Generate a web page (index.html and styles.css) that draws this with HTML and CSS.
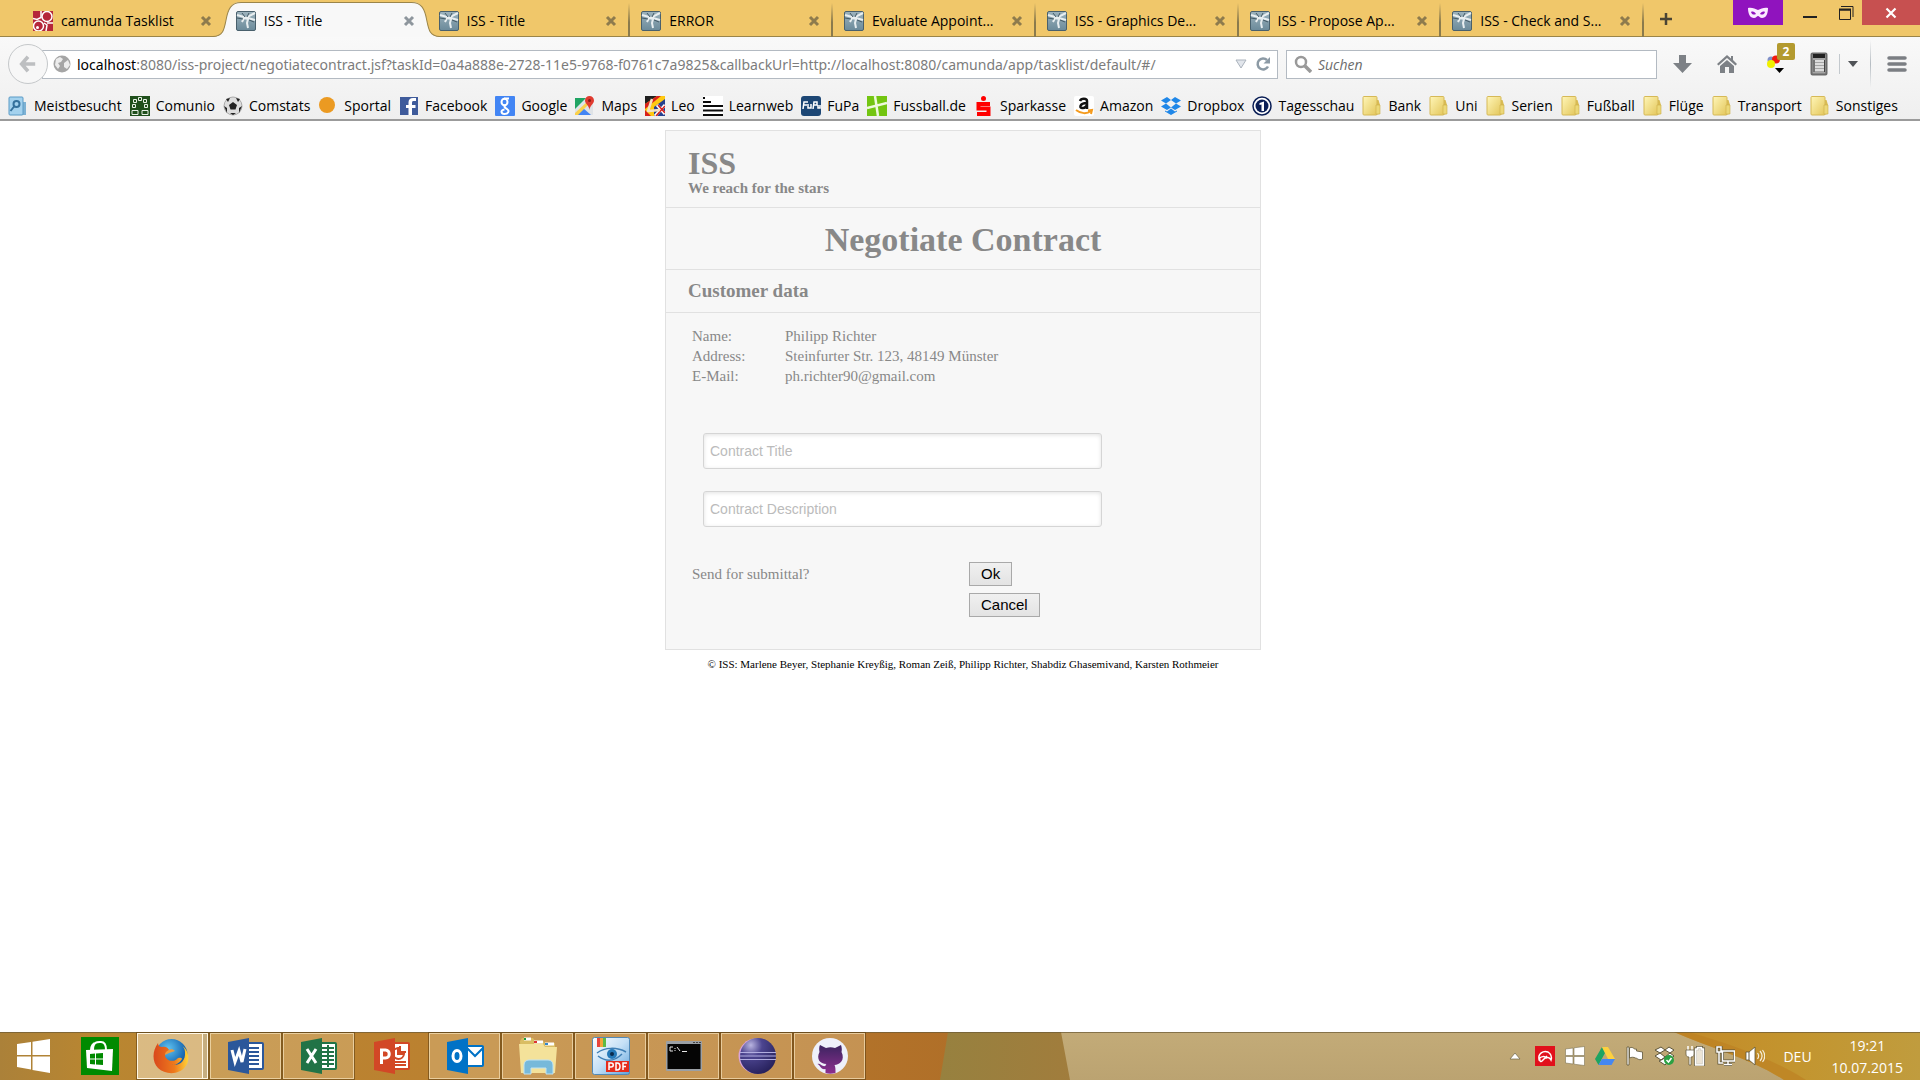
FILE: index.html
```
<!DOCTYPE html>
<html lang="de">
<head>
<meta charset="utf-8">
<title>ISS - Title</title>
<link rel="stylesheet" href="styles.css">
</head>
<body>
<svg class="sprite" aria-hidden="true">
  <defs>
    <linearGradient id="gFold" x1="0" y1="0" x2="1" y2="1"><stop offset="0" stop-color="#fff6b8"/><stop offset="1" stop-color="#e3c65a"/></linearGradient>
    <linearGradient id="gIss" x1="0" y1="0" x2="0" y2="1"><stop offset="0" stop-color="#9db3bd"/><stop offset="1" stop-color="#6b8a9a"/></linearGradient>
    <radialGradient id="gFox" cx=".4" cy=".3" r=".8"><stop offset="0" stop-color="#5fc3f0"/><stop offset=".6" stop-color="#1c6fb8"/><stop offset="1" stop-color="#123a78"/></radialGradient>
    <linearGradient id="gFox2" x1="0" y1="0" x2="1" y2="0"><stop offset="0" stop-color="#d9481c"/><stop offset=".6" stop-color="#ee7a1c"/><stop offset="1" stop-color="#ffd43a"/></linearGradient>
    <radialGradient id="gEcl" cx=".3" cy=".2" r=".9"><stop offset="0" stop-color="#b9b4e0"/><stop offset=".35" stop-color="#4c4590"/><stop offset="1" stop-color="#231d56"/></radialGradient>
    <linearGradient id="gPdf" x1="0" y1="0" x2="1" y2="1"><stop offset="0" stop-color="#fff"/><stop offset=".5" stop-color="#c5e0f6"/><stop offset="1" stop-color="#5ea3dc"/></linearGradient>
    <linearGradient id="gCat" x1="0" y1="0" x2="0" y2="1"><stop offset="0" stop-color="#3c2460"/><stop offset="1" stop-color="#8d2f8f"/></linearGradient>
  </defs>
  <symbol id="close" viewBox="0 0 12 12"><path d="M2 2l8 8M10 2l-8 8" stroke="currentColor" stroke-width="3" fill="none"/></symbol>
  <symbol id="iss" viewBox="0 0 20 20"><rect x=".5" y=".5" width="19" height="19" rx="1.500" fill="url(#gIss)" stroke="#49606c"/><path d="M1 4l7 2 2 1 3-2 6-3M8 7l4 1-1 4 1 5M8 7l-2 4M12 7l7 2" stroke="#e8eef0" stroke-width="2" fill="none"/><path d="M1 7l6 1M6 2l3 4M13 9l5 2M13 2l-2 4" stroke="#445a66" fill="none"/></symbol>
  <symbol id="camunda" viewBox="0 0 20 20"><path fill="#b5273a" d="M0 0h20v20H0z"/><path d="M0 0h8v5L5 8H0zM12 12l3 0 5 0v8h-7z" fill="#b5273a"/><g fill="none" stroke="#fff"><circle cx="14" cy="5.500" r="5" stroke-width="1.500"/><circle cx="5.500" cy="15" r="5" stroke-width="1.500"/><path d="M0 7.500l4 1 4-2V0M11 12l3 2-1 6M14 12h6" stroke-width="1.500"/></g><circle cx="4.500" cy="16.500" r="1.500" fill="#fff"/></symbol>
  <symbol id="folder" viewBox="0 0 20 20"><path d="M11 4h5.500l1.500 5v8.500l-2 1H9z" fill="#d9bb52"/><rect x="1" y=".5" width="14" height="18.500" rx="1" fill="url(#gFold)" stroke="#d6b957"/><path d="M14 9h4v9h-4z" fill="#ecd878" stroke="#cdae48" stroke-width=".6"/></symbol>
</svg>

<header class="chrome">
  <div class="tabbar">
    <nav class="tabs" aria-label="Tabs">
      <div class="tab tab-plain"><svg class="ico"><use href="#camunda"/></svg><span>camunda Tasklist</span><button class="close" aria-label="Tab schließen"><svg><use href="#close"/></svg></button></div>
      <div class="tab tab-active"><svg class="tab-shape" viewBox="0 0 226 37" preserveAspectRatio="none"><path d="M0 37C10 36 11 30 13 20C15 9 18 2 28 2H198C208 2 211 9 213 20C215 30 216 36 226 37Z" fill="#f8f8f8"/><path d="M0 36.500C10 36 11 30 13 20C15 9 18 2.500 28 2.500H198C208 2.500 211 9 213 20C215 30 216 36 226 36.500" fill="none" stroke="#9b8549"/></svg><svg class="ico"><use href="#iss"/></svg><span>ISS - Title</span><button class="close" aria-label="Tab schließen"><svg><use href="#close"/></svg></button></div>
      <div class="tab"><svg class="ico"><use href="#iss"/></svg><span>ISS - Title</span><button class="close" aria-label="Tab schließen"><svg><use href="#close"/></svg></button></div>
      <div class="tab"><svg class="ico"><use href="#iss"/></svg><span>ERROR</span><button class="close" aria-label="Tab schließen"><svg><use href="#close"/></svg></button></div>
      <div class="tab"><svg class="ico"><use href="#iss"/></svg><span>Evaluate Appoint...</span><button class="close" aria-label="Tab schließen"><svg><use href="#close"/></svg></button></div>
      <div class="tab"><svg class="ico"><use href="#iss"/></svg><span>ISS - Graphics De...</span><button class="close" aria-label="Tab schließen"><svg><use href="#close"/></svg></button></div>
      <div class="tab"><svg class="ico"><use href="#iss"/></svg><span>ISS - Propose Ap...</span><button class="close" aria-label="Tab schließen"><svg><use href="#close"/></svg></button></div>
      <div class="tab"><svg class="ico"><use href="#iss"/></svg><span>ISS - Check and S...</span><button class="close" aria-label="Tab schließen"><svg><use href="#close"/></svg></button></div>
    </nav>
    <div class="window-side">
      <button class="new-tab" aria-label="Neuer Tab"><svg viewBox="0 0 14 14"><path d="M7 1v12M1 7h12" stroke="#4a4434" stroke-width="2.500"/></svg></button>
      <div class="window-buttons">
        <button class="win private" aria-label="Privater Modus"><svg viewBox="0 0 20 12"><path d="M0 1c4-1 7 1 10 2 3-1 6-3 10-2 0 6-2 10-6 10-2 0-3-2-4-2s-2 2-4 2C2 11 0 7 0 1z" fill="#fbeaff"/><path d="M3 5c2-1 4 0 5 2-2 1-4 1-5-2zM17 5c-2-1-4 0-5 2 2 1 4 1 5-2z" fill="#9013be"/></svg></button>
        <button class="win minimize" aria-label="Minimieren"><svg viewBox="0 0 16 16"><path d="M1 12h14" stroke="#222" stroke-width="2"/></svg></button>
        <button class="win restore" aria-label="Verkleinern"><svg viewBox="0 0 16 16"><path d="M3 1.500h12V12" stroke="#222" fill="none"/><path d="M1.500 5h11v9.500h-11z" stroke="#222" fill="none"/><path d="M1 4.500h12" stroke="#222" stroke-width="2"/></svg></button>
        <button class="win quit" aria-label="Schließen"><svg viewBox="0 0 12 12"><path d="M1.500 1.500l9 9M10.500 1.500l-9 9" stroke="#fff" stroke-width="2.200"/></svg></button>
      </div>
    </div>
  </div>

  <div class="navbar">
    <button class="back" aria-label="Zurück"><svg viewBox="0 0 20 20"><path d="M10 2L3 10l7 8M3 10h15" fill="none" stroke="#bdbfc1" stroke-width="4"/></svg></button>
    <div class="url">
      <svg class="globe" viewBox="0 0 18 18"><circle cx="9" cy="9" r="8.500" fill="#a5a5a5"/><path d="M3 4l4-2 3 2-2 3-3 1 2 3-2 3-3-4zM11 8l4-3 2 5-3 4-3-2z" fill="#ececec"/></svg>
      <div class="address" role="textbox" aria-label="Adresse"><strong>localhost</strong>:8080/iss-project/negotiatecontract.jsf?taskId=0a4a888e-2728-11e5-9768-f0761c7a9825&amp;callbackUrl=http://localhost:8080/camunda/app/tasklist/default/#/</div>
      <svg class="drop" viewBox="0 0 12 10"><path d="M1 1h10L6 9z" fill="#e2e6ec" stroke="#abb3bd"/></svg>
      <svg class="reload" viewBox="0 0 16 16"><path d="M13 10.500A5.500 5.500 0 1 1 12 4" fill="none" stroke="#8c9aa5" stroke-width="2.500"/><path d="M15 1v6.500H8.500z" fill="#8c9aa5"/></svg>
    </div>
    <label class="search"><svg viewBox="0 0 18 18"><circle cx="7" cy="7" r="5" fill="none" stroke="#999" stroke-width="2.500"/><path d="M11 11l6 6" stroke="#999" stroke-width="3.500"/></svg><input type="search" placeholder="Suchen" aria-label="Suchen"></label>
    <div class="tools">
      <svg class="tool" viewBox="0 0 20 20"><path d="M6 1h7v8h6l-9.500 10L0 9h6z" fill="#7d8186"/></svg>
      <svg class="tool" viewBox="0 0 20 20"><path d="M10 1L0 10l1.500 1.500L10 4l8.500 7.500L20 10l-4-4V2h-2v2.500z" fill="#7d8186"/><path d="M10 6l-7 6v7h5v-6h4v6h5v-7z" fill="#7d8186"/></svg>
      <div class="balls"><svg viewBox="0 0 20 20"><circle cx="6" cy="6" r="3.500" fill="#8090c8"/><circle cx="11" cy="5.500" r="4" fill="#f21b0e"/><circle cx="6" cy="10" r="4" fill="#f0f000"/><path d="M10 14h9l-4.500 5z" fill="#000"/></svg><span class="badge">2</span></div>
      <svg class="tool tall" viewBox="0 0 20 24"><rect x="2.500" y="1.500" width="15" height="21" rx="1" fill="#a5a5a5" stroke="#6b6b6b" stroke-width="2"/><path d="M4 2h12v4H4z" fill="#222"/><path d="M6 9h9M6 12h9M6 15h9M6 18h9" stroke="#eee" stroke-width="1.500"/><path d="M5 8v12M15.500 8v12" stroke="#444"/></svg>
      <span class="rule"></span>
      <svg class="caret" viewBox="0 0 10 6"><path d="M0 0h10L5 6z" fill="#505357"/></svg>
      <span class="rule rule-tall"></span>
      <button class="menu" aria-label="Menü"><svg viewBox="0 0 20 18"><path d="M2 3h16M2 9h16M2 15h16" stroke="#7b7e83" stroke-width="3.500" stroke-linecap="round"/></svg></button>
    </div>
  </div>

  <nav class="bookmarks" aria-label="Lesezeichen">
    <a href="#"><svg viewBox="0 0 20 20"><path d="M13 6h5v13H5z" fill="#7eb2d4"/><rect x="1" y="1" width="14" height="18" rx="1" fill="#a4d2ee" stroke="#5b9bc6"/><circle cx="8.500" cy="8" r="3" fill="none" stroke="#35719c" stroke-width="2"/><path d="M6.500 10l-4 5" stroke="#35719c" stroke-width="2"/></svg>Meistbesucht</a>
    <a href="#"><svg viewBox="0 0 20 20"><path fill="#20501c" d="M0 0h20v20H0z"/><path d="M3.500 3.500h3v3h-3zM8.500 1.500h3v3h-3zM13.500 3.500h3v3h-3zM2.500 8.500h3v3h-3zM14.500 8.500h3v3h-3zM2 14.500h6v4H2zM12 14.500h6v4h-6z" fill="none" stroke="#e9f1e7"/></svg>Comunio</a>
    <a href="#"><svg viewBox="0 0 20 20"><circle cx="10" cy="10" r="9" fill="#ddd" stroke="#aaa"/><path d="M10 6l4 3-1.500 4.500h-5L6 9zM3 3l4-1-2 4zM17 3l-4-1 2 4zM1 10l3 2v5zM19 10l-3 2v5zM7 17h6l-3 2z" fill="#222"/></svg>Comstats</a>
    <a href="#"><svg viewBox="0 0 20 20"><circle cx="9" cy="9" r="8" fill="#eb9a22"/></svg>Sportal</a>
    <a href="#"><svg viewBox="0 0 20 20"><path d="M1 1h18v18H1z" fill="#3f5b9b"/><path d="M17 5h-2.500c-1 0-1.500.5-1.500 2v2h3.500v3H13v7h-3.500v-7H7V9h2.500V6.500C9.500 3.500 11 2 14 2h3z" fill="#fff"/></svg>Facebook</a>
    <a href="#"><svg viewBox="0 0 20 20"><rect width="20" height="20" rx="1" fill="#4285f4"/><g fill="none" stroke="#fff" stroke-width="2"><ellipse cx="9.500" cy="6" rx="3" ry="3.300"/><path d="M14 2.500H9M11 9c-3 1-1 3 1 4 3 2 1 5-2.500 5s-4.500-4 0-4.500"/></g></svg>Google</a>
    <a href="#"><svg viewBox="0 0 20 20"><path fill="#dfe3e6" d="M0 2h18v17H0z"/><path fill="#1fa463" d="M0 2h11L0 13z"/><path fill="#4285f4" d="M8 12l8 7H2z"/><path d="M0 17L14 4l2 2L3 19H0z" fill="#fbd14b"/><path d="M14.500 14C14 9 10 8 10 4.500a4.500 4.500 0 0 1 9 0c0 3.500-4 4.500-4.500 9.500z" fill="#e03b30"/><circle cx="14.500" cy="4.500" r="1.500" fill="#8a1d16"/></svg>Maps</a>
    <a href="#"><svg viewBox="0 0 20 20"><path fill="#ffc911" d="M0 0h20v20H0z"/><path fill="#1e1e1e" d="M0 0h12L0 8z"/><path fill="#d8201c" d="M12 0h4L0 13V8z"/><path d="M9 20V11l11-8v17z" fill="#25408f"/><path d="M10 20l10-11M12 9l8 9" stroke="#fff" stroke-width="3"/><path d="M11 20l9-10M13 9l7 8" stroke="#d8201c" stroke-width="1.500"/><path d="M7 3L3 15l12-1" fill="none" stroke="#f3e2c4" stroke-width="2.500"/><path d="M0 14l6 6H0z" fill="#d8201c"/></svg>Leo</a>
    <a href="#"><svg viewBox="0 0 20 20"><path fill="#fff" d="M0 0h20v20H0z"/><path d="M0 10h20M0 14.500h20M0 19h20M0 6h8M0 2h2" stroke="#0a0a0a" stroke-width="2"/></svg>Learnweb</a>
    <a href="#"><svg viewBox="0 0 20 20"><rect width="20" height="20" rx="3" fill="#1d4775"/><path d="M2 13l1-7h4M3 9h3M7 8v4h3V8M12 13l1-7h3v3h-3M17 9v3h2V9" fill="none" stroke="#fff" stroke-width="1.500"/></svg>FuPa</a>
    <a href="#"><svg viewBox="0 0 20 20"><path fill="#73c511" d="M0 0h20v20H0z"/><path d="M8 0l3 20M0 12L20 7" stroke="#eef9dd" stroke-width="2.500"/></svg>Fussball.de</a>
    <a href="#"><svg viewBox="0 0 20 20"><circle cx="9.500" cy="2.500" r="2.500" fill="#f00"/><path d="M16 8H4.500v4.500h10V18H3" fill="none" stroke="#f00" stroke-width="4"/></svg>Sparkasse</a>
    <a href="#"><svg viewBox="0 0 20 20"><rect width="20" height="20" rx="2" fill="#fff"/><path d="M6 5c1-3 7-3 7 0v8M13 7c-8 0-8 6-4 5 2 0 4-2 4-4" fill="none" stroke="#111" stroke-width="2.500"/><path d="M2 14c5 4 11 4 15 1M14 14.500l4-.5-1 4" fill="none" stroke="#f59b1e" stroke-width="2"/></svg>Amazon</a>
    <a href="#"><svg viewBox="0 0 20 20"><path d="M6 1l4 3-5 3.500L0 4.500zM14 1l6 3.500-5 3L10 4zM0 10.500l5-3 5 4L6 14zM20 10.500l-5-3-5 4 4 2.500zM10 12.500l4 3 2-1v1L10 19l-6-3.500v-1l2 1z" fill="#1f87e8"/></svg>Dropbox</a>
    <a href="#"><svg viewBox="0 0 20 20"><circle cx="10" cy="10" r="9" fill="#fff" stroke="#0b1f56" stroke-width="1.500"/><circle cx="10" cy="10" r="6.500" fill="#0b1f56"/><path d="M7.500 7L12 5.500V15H9.500V8.500l-2 .5z" fill="#fff"/></svg>Tagesschau</a>
    <a href="#"><svg><use href="#folder"/></svg>Bank</a>
    <a href="#"><svg><use href="#folder"/></svg>Uni</a>
    <a href="#"><svg><use href="#folder"/></svg>Serien</a>
    <a href="#"><svg><use href="#folder"/></svg>Fußball</a>
    <a href="#"><svg><use href="#folder"/></svg>Flüge</a>
    <a href="#"><svg><use href="#folder"/></svg>Transport</a>
    <a href="#"><svg><use href="#folder"/></svg>Sonstiges</a>
  </nav>
</header>

<main class="page">
  <section class="panel">
    <div class="brand"><h1>ISS</h1><p>We reach for the stars</p></div>
    <h2 class="title">Negotiate Contract</h2>
    <h3 class="subtitle">Customer data</h3>
    <div class="content">
      <table class="customer">
        <tr><th scope="row">Name:</th><td>Philipp Richter</td></tr>
        <tr><th scope="row">Address:</th><td>Steinfurter Str. 123, 48149 Münster</td></tr>
        <tr><th scope="row">E-Mail:</th><td>ph.richter90@gmail.com</td></tr>
      </table>
      <form class="contract">
        <input type="text" placeholder="Contract Title" aria-label="Contract Title">
        <input type="text" placeholder="Contract Description" aria-label="Contract Description">
        <div class="submit">
          <span>Send for submittal?</span>
          <div class="actions"><button type="button">Ok</button><button type="button">Cancel</button></div>
        </div>
      </form>
    </div>
  </section>
  <footer class="credits">© ISS: Marlene Beyer, Stephanie Kreyßig, Roman Zeiß, Philipp Richter, Shabdiz Ghasemivand, Karsten Rothmeier</footer>
</main>

<footer class="taskbar">
  <svg class="wallpaper" viewBox="0 0 1920 48" preserveAspectRatio="none" aria-hidden="true">
    <defs>
      <linearGradient id="w1"><stop offset="0" stop-color="#ab8139"/><stop offset=".1" stop-color="#b98631"/><stop offset=".45" stop-color="#bb8130"/><stop offset="1" stop-color="#b06f28"/></linearGradient>
      <linearGradient id="w2"><stop offset="0" stop-color="#97813f"/><stop offset="1" stop-color="#a27c3c"/></linearGradient>
      <linearGradient id="w3" x1="0" y1="0" x2="0" y2="1"><stop offset="0" stop-color="#c3ab78"/><stop offset="1" stop-color="#bba371"/></linearGradient>
      <linearGradient id="w4"><stop offset="0" stop-color="#c48a28"/><stop offset=".5" stop-color="#c3952f"/><stop offset="1" stop-color="#c09c3e"/></linearGradient>
    </defs>
    <path d="M0 0h960v48H0z" fill="url(#w1)"/><path d="M948 0h140v48H940z" fill="url(#w2)"/><path d="M1061 0h859v48H1070z" fill="url(#w3)"/><path d="M1674 0h246v48H1784C1750 26 1710 16 1674 0z" fill="url(#w4)"/><path d="M1674 0h14c50 14 90 30 118 48h-22C1750 26 1710 16 1674 0z" fill="#bd7f22" opacity=".6"/><path d="M0 .5h1920" stroke="#6b5a36" opacity=".7"/>
  </svg>
  <nav class="apps" aria-label="Programme">
    <button class="app start" aria-label="Start"><svg viewBox="0 0 38 38"><path d="M3 7l14-2v13H3zM18.500 4.700L36 2v16H18.500zM3 19.500h14v13L3 30zM18.500 19.500H36V36l-17.500-3z" fill="#fff"/></svg></button>
    <button class="app store" aria-label="Store"><svg viewBox="0 0 38 38"><path fill="#008a00" d="M0 0h38v38H0z"/><path d="M12 13c0-9 5-8 8-8s5 3 5 8M10 13c0-4 2-7 5-7" fill="none" stroke="#fff" stroke-width="2"/><path d="M5 13l27-1-1 22-25-3z" fill="#fff"/><path d="M9 17l5-.5v5H9zM15 16.400l7-.4v5.500h-7zM9 22.500h5v5L9 27zM15 22.500h7V28l-7-.6z" fill="#008a00"/></svg></button>
    <button class="app framed current" aria-label="Firefox"><svg viewBox="0 0 38 38"><circle cx="19.500" cy="18" r="16" fill="url(#gFox)"/><path d="M6 6c0 3 2 4 4 4 4-1 6 1 7 3-1 2-4 3-4 5 0 5 8 8 12 4 2-2 5-1 5 0-3 5-8 7-12 5 8 3 16-2 15-12 0-3-2-6-4-7 9 5 9 17 4 22-6 8-20 8-27 1C0 25 0 14 6 6z" fill="url(#gFox2)"/><path d="M17 13c2-1 4-1 6 1l-6 2-4 2c0-3 2-4 4-5z" fill="#f19a3b"/></svg></button>
    <button class="app framed" aria-label="Word"><svg viewBox="0 0 38 38"><rect x="18" y="6" width="18" height="26" rx="1" fill="#fff" stroke="#2b579a" stroke-width="2"/><path d="M20 11h12M20 15h12M20 19h12M20 23h12M20 27h12" stroke="#2b579a" stroke-width="2"/><path d="M1 5l21-4v36L1 33z" fill="#2b579a"/><path d="M5 13l3 12 4-11 3 11 3-13" fill="none" stroke="#fff" stroke-width="3"/></svg></button>
    <button class="app framed" aria-label="Excel"><svg viewBox="0 0 38 38"><rect x="18" y="6" width="18" height="26" rx="1" fill="#fff" stroke="#217346" stroke-width="2"/><path d="M20 11h14M20 15h14M20 19h14M20 23h14M20 27h14M28 8v22" stroke="#217346" stroke-width="2"/><path d="M1 5l21-4v36L1 33z" fill="#217346"/><path d="M7 12l9 14M16 12L7 26" stroke="#fff" stroke-width="3"/></svg></button>
    <button class="app" aria-label="PowerPoint"><svg viewBox="0 0 38 38"><rect x="18" y="6" width="18" height="26" rx="1" fill="#fff" stroke="#d24726" stroke-width="2"/><path d="M25 11a5.500 5.500 0 1 0 6 6h-6zM27 9v6h6M21 25h12M21 28h12" fill="none" stroke="#d24726" stroke-width="2"/><path d="M1 5l21-4v36L1 33z" fill="#d24726"/><path d="M8.500 27V13h4c5 0 5 8 0 8h-4" fill="none" stroke="#fff" stroke-width="3"/></svg></button>
    <button class="app framed" aria-label="Outlook"><svg viewBox="0 0 38 38"><rect x="18" y="9" width="19" height="20" rx="1" fill="#fff" stroke="#0072c6" stroke-width="2"/><path d="M20 10l9 9 9-9" fill="none" stroke="#0072c6" stroke-width="2"/><path d="M1 5l21-4v36L1 33z" fill="#0072c6"/><ellipse cx="11" cy="19" rx="4" ry="5.500" fill="none" stroke="#fff" stroke-width="3"/></svg></button>
    <button class="app framed" aria-label="Explorer"><svg viewBox="0 0 38 38"><path d="M1 4l2-3h11l2 3h8l2 2h10v6L35 36H3z" fill="#d9bd63"/><path d="M5 2h7M15 5h9M26 7h9" stroke="#fff" stroke-width="3"/><path d="M5 2h2" stroke="#1b9b3c" stroke-width="2"/><path d="M15 5h3" stroke="#d33" stroke-width="2"/><path d="M26 7h3" stroke="#38c" stroke-width="2"/><path d="M0 7h24l2 3h12l-2 26H2z" fill="#f4e29a"/><path d="M5 37v-9c0-3 2-5 5-5h19c3 0 5 2 5 5v9h-7v-6H12v6z" fill="#77b9da" stroke="#c1e3f2"/></svg></button>
    <button class="app framed" aria-label="PDF"><svg viewBox="0 0 38 38"><rect x=".5" y=".5" width="37" height="37" rx="2" fill="url(#gPdf)" stroke="#5389b5"/><path d="M5 1h3v9H5z" fill="#e8453c"/><path d="M8 1h3v9H8z" fill="#f2a53a"/><path d="M11 1h3v9h-3z" fill="#5dbb46"/><path d="M5 16c8-6 20-6 29-1M6 19c8 6 16 6 24-2" stroke="#3f7fb5" stroke-width="1.500" fill="none"/><circle cx="20" cy="17" r="5" fill="#2579b8"/><circle cx="20" cy="17" r="2" fill="#0b2b4c"/><path fill="#e62d1c" d="M14 24h23v11H14z"/><path d="M17 33v-7h2c3 0 3 4 0 4h-2M24 26v7h1c4 0 4-7 0-7zM31 33v-7h4M31 29.500h3" fill="none" stroke="#fff" stroke-width="1.500"/></svg></button>
    <button class="app framed" aria-label="Eingabeaufforderung"><svg viewBox="0 0 38 38"><rect x="1" y="4" width="36" height="30" rx="1" fill="#9ba0a5"/><path d="M2.500 7h33v25h-33z" fill="#050505"/><path d="M8 10H5v4h3M10 11v1M10 13v1M12 10l3 4M17 14.500h5" stroke="#e8e8e8" fill="none"/><path d="M28 5.500h2M31 5.500h2M34 5.500h2" stroke="#444"/></svg></button>
    <button class="app framed" aria-label="Eclipse"><svg viewBox="0 0 38 38"><circle cx="18" cy="19" r="17.500" fill="#d9a3da"/><circle cx="20" cy="19" r="18" fill="url(#gEcl)"/><path d="M2 15.500h36M2 19h36M2 22.500h36" stroke="#b2aee0" stroke-width="1"/></svg></button>
    <button class="app framed" aria-label="GitHub"><svg viewBox="0 0 38 38"><circle cx="19" cy="19" r="18" fill="#eef0fa"/><path d="M9 8l6 3c3-1 6-1 9 0l6-3c1 3 1 5 .5 7 4 8-2 13-7 13 1 2 1 4 1 8-4 1-7 1-10 0v-4c-5 1-5-4-8-5 3-1 4 3 8 2 0-1 0-1 1-2C9 27 5 22 8.500 15 8 12 8 10 9 8z" fill="url(#gCat)"/></svg></button>
  </nav>
  <div class="tray">
    <svg viewBox="0 0 20 20"><path d="M5 13h10l-5-6z" fill="#fff" stroke="#6e6446" stroke-width=".7"/></svg>
    <svg viewBox="0 0 20 20"><path fill="#e1101b" d="M0 0h20v20H0z"/><path d="M4 13C3 8 8 4 13 6c3 2 4 5 3 8-1-2-3-3-5-2-1-2-5-2-7 1z" fill="none" stroke="#fff" stroke-width="1.500"/><path d="M12 10l-5 5c-1 1-3 0-2-2" fill="none" stroke="#fff" stroke-width="1.500"/></svg>
    <svg viewBox="0 0 20 20"><path d="M.5 3L8 2v7.500H.5zM9 1.800L19.500.5v9H9zM.5 10.500H8V18L.500 17zM9 10.500h10.500v9L9 18.200z" fill="#fff" stroke="#7d7354" stroke-width=".6"/></svg>
    <svg viewBox="0 0 20 20"><path d="M7 1L0 13l3.500 6L10 7z" fill="#1da462"/><path d="M7 1h6l7 12h-7z" fill="#fdd13f"/><path d="M7 13h13l-3.500 6h-13z" fill="#4587f2"/></svg>
    <svg viewBox="0 0 20 20"><path d="M2 1h2v18H2zM4.500 2c4-2 4 2 7 1v2l6 1v7c-4 2-5-1-7-1-2-1-4-1-6 0z" fill="#fff" stroke="#5d553b" stroke-width=".8"/></svg>
    <svg viewBox="0 0 20 20"><path d="M6 1l4 3-5 3-5-3zM14 1l5 3-4 3-5-3zM0 10l5-3 5 4-4 3zM19 10l-4-3-5 4 4 3zM10 12l4 3-4 4-6-4 2-1z" fill="#fff" stroke="#5d553b"/><circle cx="14" cy="14" r="5" fill="#2ba143"/><path d="M11.500 14l2 2 3-4" fill="none" stroke="#fff" stroke-width="1.500"/></svg>
    <svg viewBox="0 0 20 20"><path d="M3 0v4M7 0v4" stroke="#fff" stroke-width="1.500"/><path d="M1 4h8v4c0 2-1 3-3 3v8H4v-8c-2 0-3-1-3-3z" fill="#fff" stroke="#5d553b" stroke-width=".7"/><path d="M10.500 3h2V1.500h4V3h2v16h-8z" fill="none" stroke="#5d553b" stroke-width="3"/><path d="M10.500 3h2V1.500h4V3h2v16h-8z" fill="#fff" fill-opacity=".7" stroke="#fff" stroke-width="1.500"/></svg>
    <svg viewBox="0 0 20 20"><g fill="none"><path d="M7.500 5h12v10h-12zM13 15v3M9 18.500h8M2 1h4v5H2zM4 6v11h4" stroke="#5d553b" stroke-width="3"/><path d="M7.500 5h12v10h-12zM13 15v3M9 18.500h8M2 1h4v5H2zM4 6v11h4" stroke="#fff" stroke-width="1.500"/></g></svg>
    <svg viewBox="0 0 20 20"><path d="M1 6h3l6-5v18l-6-5H1z" fill="#fff" stroke="#5d553b" stroke-width=".8"/><path d="M4 6v8" stroke="#5d553b"/><path d="M12.500 7c1.500 2 1.500 4 0 6M15 5c2.500 3 2.500 7 0 10M17.500 4c3 4 3 8 0 12" fill="none" stroke="#f5eed9" stroke-width="1.200"/></svg>
    <span class="lang">DEU</span>
    <time class="clock"><span>19:21</span><span>10.07.2015</span></time>
  </div>
</footer>
</body>
</html>
```
FILE: styles.css
```
* { box-sizing: border-box; }

body {
  margin: 0;
  min-height: 100vh;
  display: flex;
  flex-direction: column;
  background: #fff;
  color: #000;
  font-family: "Segoe UI", "Open Sans", "Noto Sans", sans-serif;
  font-size: 14px;
}

button { font: inherit; border: 0; padding: 0; background: none; }
svg { display: block; flex: none; }
.sprite { position: absolute; width: 0; height: 0; }

/* Browser chrome */
.chrome {
  background: linear-gradient(#f9f9f9 37px, #efefef 100%);
  border-bottom: 2px solid #9b9b9b;
}

.tabbar {
  display: flex;
  height: 37px;
  padding-left: 22px;
  background: #f0c76a;
  box-shadow: inset 0 -1px #9b8549;
}

.tabs { display: grid; grid-template-columns: repeat(8, 1fr); flex: 1; min-width: 0; }

.tab {
  display: flex;
  align-items: center;
  gap: 8px;
  min-width: 0;
  padding: 4px 11px 0 11px;
  border-right: 2px solid;
  border-image: linear-gradient(#f0c76a 10%, #8a7a4c 60%) 1;
}
.tab span { flex: 1; min-width: 0; overflow: hidden; white-space: nowrap; position: relative; }
.tab .ico { width: 20px; height: 20px; position: relative; }
.tab-plain, .tab-active { border-image: none; border-color: transparent; }
.tab-active { position: relative; }
.tab-shape { position: absolute; top: 0; left: -12px; width: calc(100% + 26px); height: 37px; }
.close { position: relative; color: #8e7b4d; }
.tab-active .close { color: #8e969d; }
.close svg { width: 12px; height: 12px; }

.window-side { display: flex; justify-content: space-between; width: 276px; }
.new-tab { width: 44px; height: 38px; display: grid; place-items: center; }
.new-tab svg { width: 14px; height: 14px; }
.window-buttons { display: flex; align-items: flex-start; }
.win { height: 25px; display: grid; place-items: center; }
.win svg { width: 16px; height: 16px; }
.private { width: 50px; background: #9013be; }
.private svg { width: 20px; height: 12px; }
.minimize { width: 54px; }
.restore { width: 17px; margin-right: 8px; }
.quit { width: 58px; background: #c75050; }
.quit svg { width: 12px; height: 12px; }

.navbar { display: flex; align-items: center; height: 54px; padding: 0 13px 0 8px; }
.back {
  width: 40px;
  height: 40px;
  display: grid;
  place-items: center;
  border: 1px solid #c5c8ca;
  border-radius: 50%;
  background: #f7f7f7;
  position: relative;
  z-index: 1;
}
.back svg { width: 18px; height: 20px; }
.url {
  flex: 1;
  min-width: 0;
  display: flex;
  align-items: center;
  height: 29px;
  margin-left: -6px;
  padding: 0 6px 0 10px;
  border: 1px solid #b3bac2;
  background: #fff;
}
.globe { width: 18px; height: 18px; }
.address { flex: 1; min-width: 0; margin-left: 6px; overflow: hidden; white-space: nowrap; color: #7c7c7c; font-family: "Segoe UI", "Noto Sans", sans-serif; }
.address strong { color: #000; font-weight: 400; }
.drop { width: 12px; height: 10px; margin-right: 8px; }
.reload { width: 16px; height: 16px; }
.search {
  display: flex;
  align-items: center;
  gap: 6px;
  width: 371px;
  height: 29px;
  margin-left: 8px;
  padding: 0 7px;
  border: 1px solid #b3bac2;
  background: #fff;
}
.search svg { width: 18px; height: 18px; }
.search input { flex: 1; min-width: 0; border: 0; padding: 0; outline: 0; background: none; font: 14px "Open Sans", sans-serif; }
.search input::placeholder { color: #6c6c6c; opacity: 1; font-style: italic; }

.tools { display: flex; align-items: center; margin-left: 16px; }
.tool { width: 20px; height: 20px; margin-right: 24px; }
.balls { position: relative; width: 20px; height: 20px; margin: 0 24px 0 4px; }
.balls svg { width: 20px; height: 20px; }
.badge {
  position: absolute;
  left: 12px;
  top: -11px;
  width: 18px;
  height: 17px;
  border-radius: 2px;
  background: #b39a2f;
  color: #fff;
  font-weight: 700;
  font-size: 12px;
  line-height: 17px;
  text-align: center;
}
.tall { height: 24px; margin-right: 10px; }
.rule { width: 1px; height: 20px; background: #c3c9ce; }
.caret { width: 10px; height: 6px; margin: 0 12px 0 8px; }
.rule-tall { height: 48px; background: linear-gradient(transparent, #b5bcc2, transparent); }
.menu { margin-left: 16px; }
.menu svg { width: 20px; height: 18px; }

.bookmarks {
  display: flex;
  align-items: center;
  justify-content: space-between;
  height: 28px;
  padding: 1px 22px 0 8px;
}
.bookmarks a { display: flex; align-items: center; gap: 6px; color: #000; text-decoration: none; white-space: nowrap; }
.bookmarks svg { width: 20px; height: 20px; }

/* Page */
.page {
  flex: 1;
  display: flex;
  flex-direction: column;
  align-items: center;
  padding: 9px 0 0 6px;
  font-family: Georgia, "Liberation Serif", serif;
}
.panel {
  width: 100%;
  max-width: 596px;
  border: 1px solid #e1e1e1;
  background: #f7f7f7;
  color: #888;
  font-size: 15px;
}
.panel h1, .panel h2, .panel h3, .panel p { margin: 0; }
.brand { height: 77px; padding: 15px 22px 0; border-bottom: 1px solid #e1e1e1; }
.brand h1 { font-size: 32px; line-height: 34px; }
.brand p { font-weight: 700; line-height: 16px; }
.panel .title { padding: 14px 0 11px; border-bottom: 1px solid #e1e1e1; font-size: 34px; line-height: 36px; text-align: center; }
.panel .subtitle { padding: 10px 22px; border-bottom: 1px solid #e1e1e1; font-size: 19px; line-height: 22px; }
.content { padding: 13px 26px 32px; }
.customer { border-collapse: collapse; }
.customer th, .customer td { padding: 0; line-height: 20px; font-weight: 400; text-align: left; }
.customer th { width: 93px; }
.contract { margin-top: 47px; }
.contract input {
  display: block;
  width: 399px;
  height: 36px;
  margin: 0 0 22px 11px;
  padding: 0 6px;
  border: 1px solid #d5d5d5;
  border-radius: 3px;
  box-shadow: inset 0 1px 4px rgba(0, 0, 0, .12);
  background: #fff;
  font: 14px Arial, "Liberation Sans", sans-serif;
}
.contract input::placeholder { color: #bbb; opacity: 1; }
.submit { display: grid; grid-template-columns: 277px 1fr; line-height: 24px; margin-top: 35px; }
.actions { display: flex; flex-direction: column; align-items: flex-start; gap: 7px; }
.actions button {
  height: 24px;
  padding: 0 11px 2px;
  border: 1px solid #a9a9a9;
  background: linear-gradient(#f0f0f0, #e3e3e3);
  color: #000;
  font: 15px Arial, "Liberation Sans", sans-serif;
}
.credits { margin-top: 7px; font-size: 11px; line-height: 14px; }

/* Windows taskbar */
.taskbar { position: relative; display: flex; justify-content: space-between; height: 48px; }
.wallpaper { position: absolute; inset: 0; width: 100%; height: 100%; }
.apps, .tray { position: relative; display: flex; align-items: center; }
.apps { gap: 2px; }
.app { width: 71px; height: 46px; display: grid; place-items: center; }
.app svg { width: 38px; height: 38px; }
.start { width: 65px; }
.store { width: 65px; margin-right: 3px; }
.framed {
  border: 1px solid rgba(255, 240, 205, .6);
  outline: 1px solid rgba(95, 65, 20, .6);
  background: rgba(225, 195, 145, .4);
}
.current {
  padding-right: 4px;
  border-color: #fff7e4;
  background: rgba(235, 215, 175, .65);
  box-shadow: inset -4px 0 rgba(160, 125, 60, .6), inset -5px 0 #fff7e4;
}
.tray { color: #fff; gap: 10px; padding-right: 17px; }
.tray svg { width: 20px; height: 20px; }
.lang { margin-left: 8px; }
.clock { display: flex; flex-direction: column; align-items: center; margin-left: 10px; padding-top: 2px; line-height: 22px; }
```
